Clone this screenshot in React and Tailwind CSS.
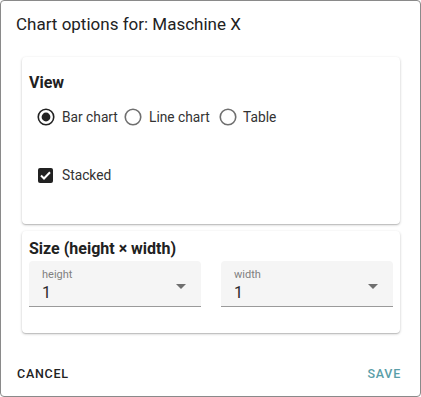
import React from "react";

function Radio({ checked }) {
  return (
    <svg width="18" height="18" viewBox="0 0 18 18" className="shrink-0">
      <circle cx="9" cy="9" r="7.75" fill="none" stroke={checked ? "#222" : "#6f6f6f"} strokeWidth="1.6" />
      {checked && <circle cx="9" cy="9" r="4.4" fill="#222" />}
    </svg>
  );
}

function Field({ label }) {
  return (
    <div className="relative h-[46px] bg-[#f5f5f5] rounded-t-[4px] border-b border-[#9a9a9a] pl-[13px] pt-[7px]">
      <div className="text-[11px] leading-[14px] text-[#808080]">{label}</div>
      <div className="text-[16px] leading-[20px] text-[#2a2a2a] mt-[1px]">1</div>
      <svg width="10" height="5" viewBox="0 0 10 5" className="absolute right-[15px] top-[23px]">
        <path d="M0 0 L10 0 L5 5 Z" fill="#6f6f6f" />
      </svg>
    </div>
  );
}

export default function App() {
  return (
    <div
      className="w-[421px] h-[397px] bg-white border border-[#8a8a8a] rounded-[4px] flex flex-col text-[#212121]"
      style={{ fontFamily: "Roboto, 'Liberation Sans', sans-serif" }}
    >
      <div className="pl-[15px] pt-[11px] text-[17px] leading-[24px] font-normal text-[#222]">Chart options for: Maschine X</div>

      <div className="ml-[21px] mr-[20px] mt-[21px] h-[167px] bg-white rounded-[4px] shadow-[0_1px_3px_rgba(0,0,0,0.2),0_1px_1px_rgba(0,0,0,0.14)] pl-[7px] pt-[14px]">
        <div className="text-[16px] leading-[24px] font-bold">View</div>
        <div className="flex items-center h-[36px] mt-[4px] pl-[8px] text-[13.75px] text-[#333] whitespace-nowrap">
          <Radio checked />
          <span className="ml-[7px] mr-[7px] w-[55px]">Bar chart</span>
          <Radio />
          <span className="ml-[7px] mr-[10px] w-[60px]">Line chart</span>
          <Radio />
          <span className="ml-[6px]">Table</span>
        </div>
        <div className="flex items-center h-[36px] mt-[22px] pl-[9px] text-[13.75px] text-[#333]">
          <div className="w-[15px] h-[15px] bg-[#212121] rounded-[2px] flex items-center justify-center">
            <svg width="11" height="9" viewBox="0 0 11 9">
              <path d="M1 4.5 L4 7.5 L10 1.2" fill="none" stroke="white" strokeWidth="2" />
            </svg>
          </div>
          <span className="ml-[9px]">Stacked</span>
        </div>
      </div>

      <div className="ml-[21px] mr-[20px] mt-[7px] h-[102px] bg-white rounded-[4px] shadow-[0_1px_3px_rgba(0,0,0,0.2),0_1px_1px_rgba(0,0,0,0.14)] px-[7px] pt-[6px]">
        <div className="text-[16px] leading-[24px] font-bold">Size (height × width)</div>
        <div className="grid grid-cols-2 gap-[20px]">
          <Field label="height" />
          <Field label="width" />
        </div>
      </div>

      <div className="flex justify-between items-center pl-[16px] pr-[19px] mt-[32px] text-[12.5px] font-medium tracking-[0.06em]">
        <span className="text-[#222]">CANCEL</span>
        <span className="text-[#5a9ea8]">SAVE</span>
      </div>
    </div>
  );
}
